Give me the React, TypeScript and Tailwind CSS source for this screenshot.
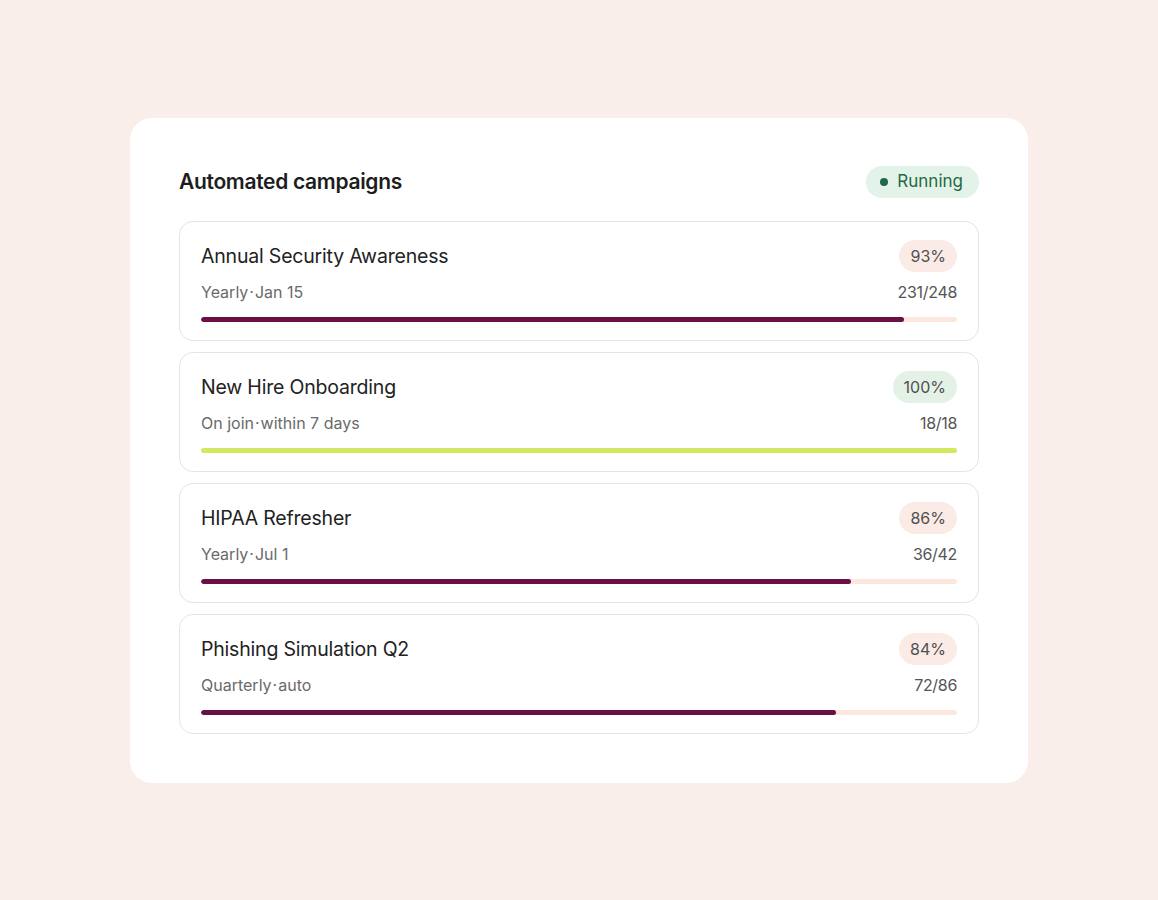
type Campaign = {
  name: string
  schedule: [string, string]
  done: number
  total: number
}

const campaigns: Campaign[] = [
  { name: 'Annual Security Awareness', schedule: ['Yearly', 'Jan 15'], done: 231, total: 248 },
  { name: 'New Hire Onboarding', schedule: ['On join', 'within 7 days'], done: 18, total: 18 },
  { name: 'HIPAA Refresher', schedule: ['Yearly', 'Jul 1'], done: 36, total: 42 },
  { name: 'Phishing Simulation Q2', schedule: ['Quarterly', 'auto'], done: 72, total: 86 },
]

function CampaignCard({ name, schedule, done, total }: Campaign) {
  const pct = Math.round((done / total) * 100)
  const complete = pct >= 100

  return (
    <div className="rounded-[14px] border border-[#e6e4e3] bg-white px-[21px] pt-[18px] pb-[18px]">
      <div className="flex items-center justify-between h-[32px]">
        <p className="text-[19.5px] leading-[24px] text-[#222222] tracking-[-0.01em]">{name}</p>
        <span
          className={`h-[32px] flex items-center rounded-full px-[11px] text-[16px] text-[#505050] ${
            complete ? 'bg-[#e4f1e7]' : 'bg-[#fbebe7]'
          }`}
        >
          {pct}%
        </span>
      </div>
      <div className="flex items-center justify-between mt-[10px] h-[20px] text-[16px] leading-[20px] text-[#6a6a6a]">
        <span>
          {schedule[0]}
          <span className="mx-[1px]">·</span>
          {schedule[1]}
        </span>
        <span className="text-[#555555] tracking-[-0.02em]">
          {done}/{total}
        </span>
      </div>
      <div className="mt-[15px] h-[5px] rounded-full bg-[#fde6de] overflow-hidden">
        <div
          className={`h-full rounded-full ${complete ? 'bg-[#d3e85f]' : 'bg-[#6b0f47]'}`}
          style={{ width: `${pct}%` }}
        />
      </div>
    </div>
  )
}

export default function App() {
  return (
    <div className="min-h-[900px] bg-[#faeeea] pl-[130px] pt-[118px] font-['Inter',sans-serif]">
      <div className="w-[898px] h-[665px] rounded-[22px] bg-white px-[49px] pt-[48px] pb-[49px]">
        <div className="flex items-center justify-between h-[32px] mb-[23px]">
          <h2 className="text-[21px] font-semibold text-[#1d1d1d] tracking-[-0.015em]">
            Automated campaigns
          </h2>
          <span className="h-[32px] flex items-center gap-[9px] rounded-full bg-[#e3f3e9] pl-[14px] pr-[16px] text-[17px] text-[#1f6a45]">
            <span className="w-[8px] h-[8px] rounded-full bg-[#1d6a46]" />
            Running
          </span>
        </div>
        <div className="flex flex-col gap-[11px]">
          {campaigns.map((c) => (
            <CampaignCard key={c.name} {...c} />
          ))}
        </div>
      </div>
    </div>
  )
}
